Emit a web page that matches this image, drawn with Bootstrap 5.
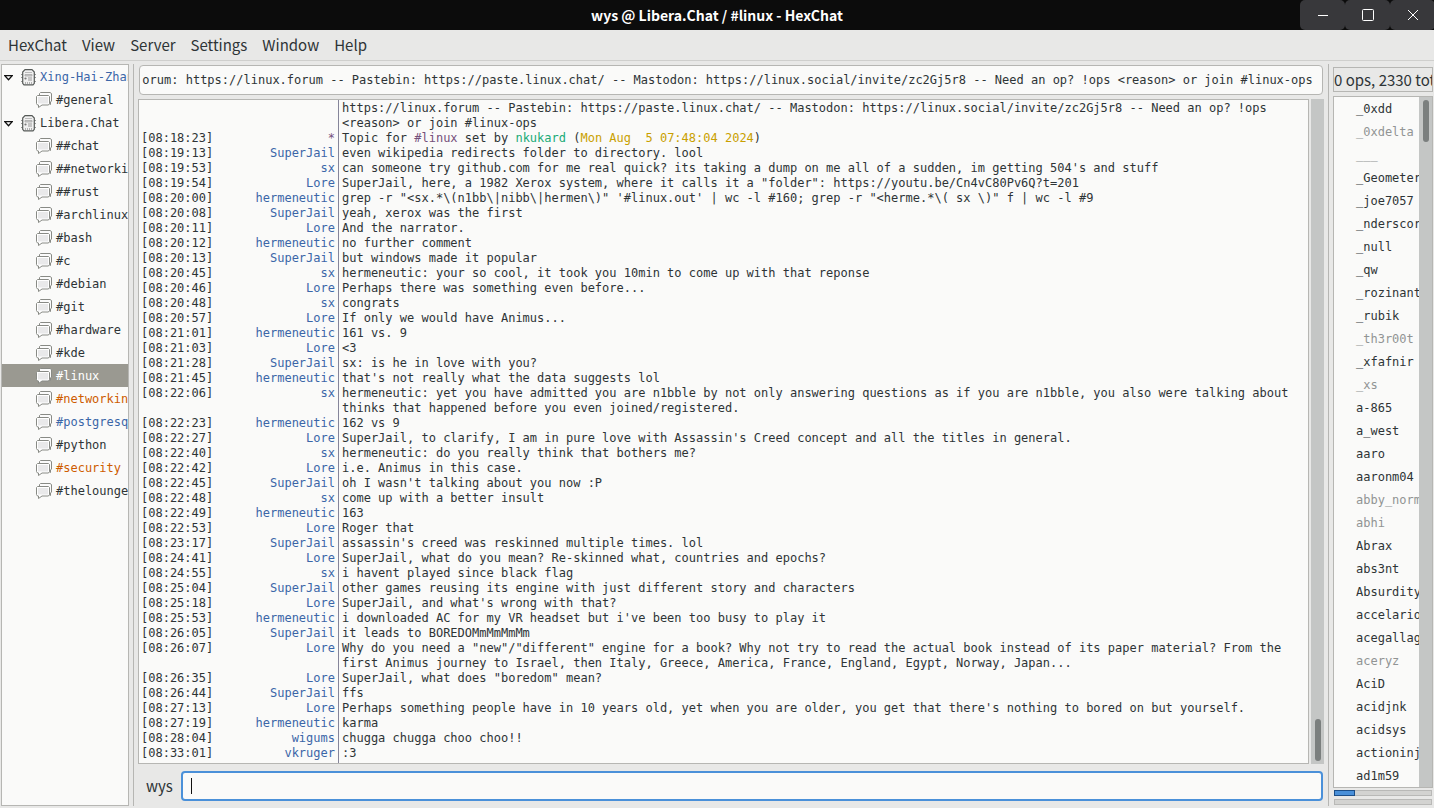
<!DOCTYPE html>
<html lang="en">
<head>
<meta charset="utf-8">
<meta name="viewport" content="width=device-width, initial-scale=1">
<title>wys @ Libera.Chat / #linux - HexChat</title>
<link href="https://cdn.jsdelivr.net/npm/bootstrap@5.3.0/dist/css/bootstrap.min.css" rel="stylesheet">
<style>
:root{--edge:#b6b6b3;--paper:#fafaf9;--ink:#2e3436;--blue:#3b66a8;--trough:#c4c6c5;--thumb:#7b7f7e}
body{background:#e8e8e7;color:var(--ink);font:15px/24px "Noto Sans CJK SC",sans-serif}
.mono{font:12px/15px "DejaVu Sans Mono",monospace}
.titlebar{background:#0c0c0c;color:#fff;height:30px}
.titlebar h1{font-size:14px;line-height:30px;font-weight:700}
.winbtns{margin-right:-1px}
.winbtn{width:45px;height:30px;background:#38383b;border-radius:5px;padding:0;border:0}
.winbtn svg{stroke:#fff;fill:none}
.menubar{border-bottom:1px solid #cfcfcd;height:31px;padding-left:8px;gap:15px}
.menubar button{background:none;border:0;color:var(--ink);padding:0;line-height:30px}
.workspace{padding:3px 1px 2px}
.pane{background:var(--paper);border:1px solid var(--edge)}
.tree-pane{width:128px}
.splitter{width:1px;background:var(--edge)}
.tree a,.users a{display:flex;align-items:center;height:23px;padding-top:2px;color:var(--ink);text-decoration:none;white-space:pre}
.tree a{padding-left:34px;gap:4px}
.tree a.server{padding-left:2px;gap:0}
.tree svg{flex:none}
.tree a.server span{padding-left:4px}
.tree a.active{background:#9a9991;color:#fff}
.tree a.talk{color:var(--blue)}
.tree a.hilite{color:#ce5c00}
.center{padding:1px 4px 5px}
.topic{height:30px;border:1px solid var(--edge);border-radius:4px;background:var(--paper);color:var(--ink);padding:0 9px 0 2px;margin:0 1px}
.log{background:linear-gradient(#85859a,#85859a) 199px 0/1px 100% no-repeat,var(--paper);padding-top:1px}
.log table{table-layout:fixed;border-collapse:collapse}
.log td{padding:0;vertical-align:top}
.log col.c-time{width:76px}
.log col.c-nick{width:124px}
.log td:nth-child(1){padding-left:2px}
.log td:nth-child(2){padding-right:4px;text-align:right;color:var(--blue)}
.log td:nth-child(3){padding:0 0 0 3px}
.log .pre{white-space:pre}
.log .hash{color:#75507b}
.log .who{color:#20ab78}
.log .date{color:#c9a000}
.vbar{width:13px;background:var(--trough);padding:3px 3px 3px 4px}
.vbar div{width:6px;height:42px;border-radius:3px;background:var(--thumb)}
.log-bar{margin-left:2px}
.say{margin:7px 1px 0 0}
.nickname{padding:0 8px}
.entry{height:30px;border:2px solid #4a90d9;border-radius:4px;background:linear-gradient(#111,#111) 8px 5px/1px 16px no-repeat,var(--paper);color:var(--ink);padding:0 8px;outline:0;caret-color:transparent}
.right{width:100px;padding:3px 0 1px 0}
.count{border:1px solid var(--edge);height:25px;line-height:24px;white-space:nowrap;margin-bottom:4px}
.users{padding-left:22px;margin:0}
.users a.away{color:#919494}
.meter{height:6px;background:#d3d3d1;border:1px solid #b9b9b7;margin:2px 1px 0}
.meter + .meter{margin-top:3px}
.meter div{height:6px;margin:-1px;background:#4a90d9;border:1px solid #1d4f88}
</style>
</head>
<body class="vh-100 d-flex flex-column overflow-hidden">
<svg class="d-none">
<symbol id="server" viewBox="0 0 15 17"><path d="M0 5.500h2M0 8.500h2M0 12.500h2M13 5.500h2M13 8.500h2M13 12.500h2" stroke="#999"/><path d="M4 .7h7l2.300 2.300v11.300l-1.300 1.500h-9l-1.300-1.500V3z" fill="#f1f1f1" stroke="#565a58" stroke-width="1.200"/><path d="M4 3.500h7" stroke="#bbb"/><path d="M4 5.500h7v1.500H4z" fill="#ccc" stroke="#aaa" stroke-width=".8"/><circle cx="4.500" cy="9.500" r="1.100" fill="#777"/><path d="M7 9h4M7 11h4" stroke="#999"/><path d="M4.500 13v2M6.500 13v2M8.500 13v2M10.500 13v2" stroke="#b0b0b0"/></symbol>
<symbol id="chat" viewBox="0 0 16 18"><path d="M4.500 .5h9.500l1.500 1v7.500l-1 1v2.500l-2.500-2h-7.500l-1-1v-8z" fill="#fbfbfb" stroke="#888a85"/><path d="M1.500 3.500h11l1 1v7l-1 1.500h-6.500l-3.500 2.500v-2.500h-1l-1-1.500v-7z" fill="#fff" stroke="#888a85"/><path d="M2 5h10v6.500H2z" fill="#e9e9ea"/></symbol>
<symbol id="open" viewBox="0 0 9 6"><path d="M.8 .7h7.400L4.500 4.800z" fill="#fff" stroke="#111" stroke-width="1.300"/></symbol>
</svg>

<header class="titlebar flex-shrink-0 position-relative">
  <h1 class="text-center m-0">wys @ Libera.Chat / #linux - HexChat</h1>
  <div class="winbtns position-absolute top-0 end-0 d-flex">
    <button class="winbtn" aria-label="Minimize"><svg width="12" height="12" class="d-block mx-auto"><path d="M1 6.500h10"/></svg></button>
    <button class="winbtn" aria-label="Maximize"><svg width="12" height="12" class="d-block mx-auto"><rect x=".5" y=".5" width="11" height="11" rx="1"/></svg></button>
    <button class="winbtn" aria-label="Close"><svg width="12" height="12" class="d-block mx-auto"><path d="M1 1l10 10M11 1L1 11"/></svg></button>
  </div>
</header>

<nav class="menubar d-flex flex-shrink-0">
  <button>HexChat</button><button>View</button><button>Server</button><button>Settings</button><button>Window</button><button>Help</button>
</nav>

<div class="workspace d-flex flex-grow-1 overflow-hidden">
  <aside class="pane tree-pane flex-shrink-0 overflow-hidden">
    <ul class="tree mono list-unstyled m-0">
      <li><a href="#" class="server talk"><svg width="9" height="6"><use href="#open"/></svg><svg width="15" height="17" class="ms-2"><use href="#server"/></svg><span>Xing-Hai-Zhan</span></a></li>
      <li><a href="#"><svg width="16" height="18"><use href="#chat"/></svg>#general</a></li>
      <li><a href="#" class="server"><svg width="9" height="6"><use href="#open"/></svg><svg width="15" height="17" class="ms-2"><use href="#server"/></svg><span>Libera.Chat</span></a></li>
      <li><a href="#"><svg width="16" height="18"><use href="#chat"/></svg>##chat</a></li>
      <li><a href="#"><svg width="16" height="18"><use href="#chat"/></svg>##networking</a></li>
      <li><a href="#"><svg width="16" height="18"><use href="#chat"/></svg>##rust</a></li>
      <li><a href="#"><svg width="16" height="18"><use href="#chat"/></svg>#archlinux</a></li>
      <li><a href="#"><svg width="16" height="18"><use href="#chat"/></svg>#bash</a></li>
      <li><a href="#"><svg width="16" height="18"><use href="#chat"/></svg>#c</a></li>
      <li><a href="#"><svg width="16" height="18"><use href="#chat"/></svg>#debian</a></li>
      <li><a href="#"><svg width="16" height="18"><use href="#chat"/></svg>#git</a></li>
      <li><a href="#"><svg width="16" height="18"><use href="#chat"/></svg>#hardware</a></li>
      <li><a href="#"><svg width="16" height="18"><use href="#chat"/></svg>#kde</a></li>
      <li><a href="#" class="active" aria-current="true"><svg width="16" height="18"><use href="#chat"/></svg>#linux</a></li>
      <li><a href="#" class="hilite"><svg width="16" height="18"><use href="#chat"/></svg>#networking</a></li>
      <li><a href="#" class="talk"><svg width="16" height="18"><use href="#chat"/></svg>#postgresql</a></li>
      <li><a href="#"><svg width="16" height="18"><use href="#chat"/></svg>#python</a></li>
      <li><a href="#" class="hilite"><svg width="16" height="18"><use href="#chat"/></svg>#security</a></li>
      <li><a href="#"><svg width="16" height="18"><use href="#chat"/></svg>#thelounge</a></li>
    </ul>
  </aside>
  <div class="splitter ms-1 flex-shrink-0"></div>

  <main class="center d-flex flex-column flex-grow-1 overflow-hidden">
    <div class="d-flex flex-shrink-0"><input class="topic mono flex-grow-1" id="topic" aria-label="Topic" value="s -- Forum: https://linux.forum -- Pastebin: https://paste.linux.chat/ -- Mastodon: https://linux.social/invite/zc2Gj5r8 -- Need an op? !ops &lt;reason&gt; or join #linux-ops"></div>
    <div class="d-flex flex-grow-1 overflow-hidden mt-1">
      <div class="log pane mono flex-grow-1 overflow-hidden">
        <table class="w-100">
          <colgroup><col class="c-time"><col class="c-nick"><col></colgroup>
          <tbody>
          <tr><td></td><td></td><td>https://linux.forum -- Pastebin: https://paste.linux.chat/ -- Mastodon: https://linux.social/invite/zc2Gj5r8 -- Need an op? !ops &lt;reason&gt; or join #linux-ops</td></tr>
          <tr><td>[08:18:23]</td><td><span class="hash">*</span></td><td class="pre">Topic for <span class="hash">#linux</span> set by <span class="who">nkukard</span> (<span class="date">Mon Aug  5 07:48:04 2024</span>)</td></tr>
          <tr><td>[08:19:13]</td><td>SuperJail</td><td>even wikipedia redirects folder to directory. lool</td></tr>
          <tr><td>[08:19:53]</td><td>sx</td><td>can someone try github.com for me real quick? its taking a dump on me all of a sudden, im getting 504's and stuff</td></tr>
          <tr><td>[08:19:54]</td><td>Lore</td><td>SuperJail, here, a 1982 Xerox system, where it calls it a "folder": https://youtu.be/Cn4vC80Pv6Q?t=201</td></tr>
          <tr><td>[08:20:00]</td><td>hermeneutic</td><td>grep -r "&lt;sx.*\(n1bb\|nibb\|hermen\)" '#linux.out' | wc -l #160; grep -r "&lt;herme.*\( sx \)" f | wc -l #9</td></tr>
          <tr><td>[08:20:08]</td><td>SuperJail</td><td>yeah, xerox was the first</td></tr>
          <tr><td>[08:20:11]</td><td>Lore</td><td>And the narrator.</td></tr>
          <tr><td>[08:20:12]</td><td>hermeneutic</td><td>no further comment</td></tr>
          <tr><td>[08:20:13]</td><td>SuperJail</td><td>but windows made it popular</td></tr>
          <tr><td>[08:20:45]</td><td>sx</td><td>hermeneutic: your so cool, it took you 10min to come up with that reponse</td></tr>
          <tr><td>[08:20:46]</td><td>Lore</td><td>Perhaps there was something even before...</td></tr>
          <tr><td>[08:20:48]</td><td>sx</td><td>congrats</td></tr>
          <tr><td>[08:20:57]</td><td>Lore</td><td>If only we would have Animus...</td></tr>
          <tr><td>[08:21:01]</td><td>hermeneutic</td><td>161 vs. 9</td></tr>
          <tr><td>[08:21:03]</td><td>Lore</td><td>&lt;3</td></tr>
          <tr><td>[08:21:28]</td><td>SuperJail</td><td>sx: is he in love with you?</td></tr>
          <tr><td>[08:21:45]</td><td>hermeneutic</td><td>that's not really what the data suggests lol</td></tr>
          <tr><td>[08:22:06]</td><td>sx</td><td>hermeneutic: yet you have admitted you are n1bble by not only answering questions as if you are n1bble, you also were talking about thinks that happened before you even joined/registered.</td></tr>
          <tr><td>[08:22:23]</td><td>hermeneutic</td><td>162 vs 9</td></tr>
          <tr><td>[08:22:27]</td><td>Lore</td><td>SuperJail, to clarify, I am in pure love with Assassin's Creed concept and all the titles in general.</td></tr>
          <tr><td>[08:22:40]</td><td>sx</td><td>hermeneutic: do you really think that bothers me?</td></tr>
          <tr><td>[08:22:42]</td><td>Lore</td><td>i.e. Animus in this case.</td></tr>
          <tr><td>[08:22:45]</td><td>SuperJail</td><td>oh I wasn't talking about you now :P</td></tr>
          <tr><td>[08:22:48]</td><td>sx</td><td>come up with a better insult</td></tr>
          <tr><td>[08:22:49]</td><td>hermeneutic</td><td>163</td></tr>
          <tr><td>[08:22:53]</td><td>Lore</td><td>Roger that</td></tr>
          <tr><td>[08:23:17]</td><td>SuperJail</td><td>assassin's creed was reskinned multiple times. lol</td></tr>
          <tr><td>[08:24:41]</td><td>Lore</td><td>SuperJail, what do you mean? Re-skinned what, countries and epochs?</td></tr>
          <tr><td>[08:24:55]</td><td>sx</td><td>i havent played since black flag</td></tr>
          <tr><td>[08:25:04]</td><td>SuperJail</td><td>other games reusing its engine with just different story and characters</td></tr>
          <tr><td>[08:25:18]</td><td>Lore</td><td>SuperJail, and what's wrong with that?</td></tr>
          <tr><td>[08:25:53]</td><td>hermeneutic</td><td>i downloaded AC for my VR headset but i've been too busy to play it</td></tr>
          <tr><td>[08:26:05]</td><td>SuperJail</td><td>it leads to BOREDOMmMmMmMm</td></tr>
          <tr><td>[08:26:07]</td><td>Lore</td><td>Why do you need a "new"/"different" engine for a book? Why not try to read the actual book instead of its paper material? From the first Animus journey to Israel, then Italy, Greece, America, France, England, Egypt, Norway, Japan...</td></tr>
          <tr><td>[08:26:35]</td><td>Lore</td><td>SuperJail, what does "boredom" mean?</td></tr>
          <tr><td>[08:26:44]</td><td>SuperJail</td><td>ffs</td></tr>
          <tr><td>[08:27:13]</td><td>Lore</td><td>Perhaps something people have in 10 years old, yet when you are older, you get that there's nothing to bored on but yourself.</td></tr>
          <tr><td>[08:27:19]</td><td>hermeneutic</td><td>karma</td></tr>
          <tr><td>[08:28:04]</td><td>wigums</td><td>chugga chugga choo choo!!</td></tr>
          <tr><td>[08:33:01]</td><td>vkruger</td><td>:3</td></tr>
          </tbody>
        </table>
      </div>
      <div class="vbar log-bar d-flex align-items-end flex-shrink-0"><div></div></div>
    </div>
    <div class="say d-flex flex-shrink-0 align-items-center">
      <label class="nickname" for="entry">wys</label>
      <input class="entry mono flex-grow-1" id="entry" value="">
    </div>
  </main>
  <div class="splitter flex-shrink-0"></div>

  <aside class="right ms-1 d-flex flex-column flex-shrink-0 overflow-hidden">
    <div class="count overflow-hidden flex-shrink-0">0 ops, 2330 total</div>
    <div class="pane d-flex flex-grow-1 overflow-hidden">
      <ul class="users mono list-unstyled flex-grow-1 overflow-hidden">
        <li><a href="#">_0xdd</a></li><li><a href="#" class="away">_0xdelta</a></li><li><a href="#" class="away">___</a></li>
        <li><a href="#">_Geometer</a></li><li><a href="#">_joe7057</a></li><li><a href="#">_nderscore</a></li>
        <li><a href="#">_null</a></li><li><a href="#">_qw</a></li><li><a href="#">_rozinante</a></li>
        <li><a href="#">_rubik</a></li><li><a href="#" class="away">_th3r00t</a></li><li><a href="#">_xfafnir</a></li>
        <li><a href="#" class="away">_xs</a></li><li><a href="#">a-865</a></li><li><a href="#">a_west</a></li>
        <li><a href="#">aaro</a></li><li><a href="#">aaronm04</a></li><li><a href="#" class="away">abby_normal</a></li>
        <li><a href="#" class="away">abhi</a></li><li><a href="#">Abrax</a></li><li><a href="#">abs3nt</a></li>
        <li><a href="#">Absurdity</a></li><li><a href="#">accelario</a></li><li><a href="#">acegallagher</a></li>
        <li><a href="#" class="away">aceryz</a></li><li><a href="#">AciD</a></li><li><a href="#">acidjnk</a></li>
        <li><a href="#">acidsys</a></li><li><a href="#">actioninja</a></li><li><a href="#">ad1m59</a></li>
      </ul>
      <div class="vbar flex-shrink-0"><div></div></div>
    </div>
    <div class="meter flex-shrink-0"><div style="width:21px"></div></div>
    <div class="meter flex-shrink-0"></div>
  </aside>
</div>
<script>
const topic=document.getElementById('topic');
topic.scrollLeft=topic.scrollWidth;
document.getElementById('entry').focus();
</script>
<script src="https://cdn.jsdelivr.net/npm/bootstrap@5.3.0/dist/js/bootstrap.bundle.min.js"></script>
</body>
</html>
